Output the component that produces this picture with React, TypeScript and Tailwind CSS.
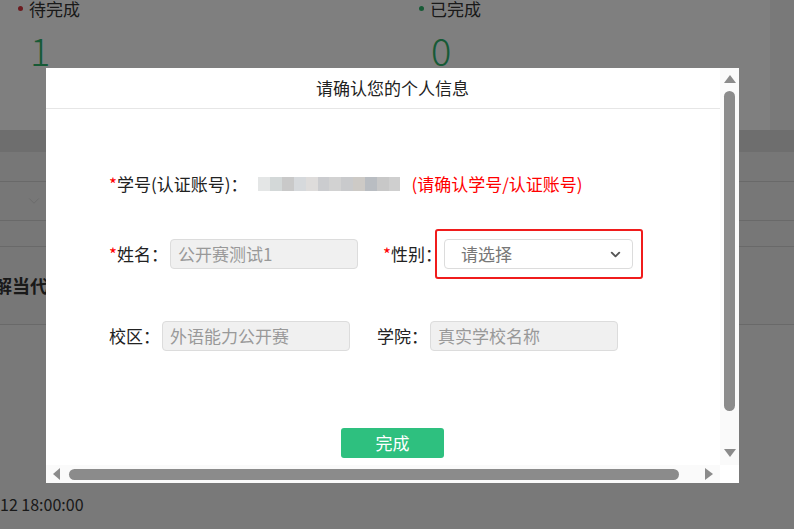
import { ChevronDown } from "lucide-react";

const font = { fontFamily: '"Noto Sans CJK SC", "Noto Sans", sans-serif' };

const mosaic = [
  "#e4e6e6",
  "#d3d8d8",
  "#c9c9c9",
  "#d6d9dc",
  "#dedcdb",
  "#cbcccf",
  "#d2d2d2",
  "#c9cacc",
  "#cdcac6",
  "#b9bdc2",
  "#c8c8c8",
  "#cfcfcf",
];

function Stat({ label, value, dot }: { label: string; value: string; dot: string }) {
  return (
    <div className="flex flex-col">
      <div className="flex items-center gap-[6px] -mt-[4px] text-[17px] text-[#333]">
        <span className={`h-[5px] w-[5px] rounded-full ${dot}`} />
        <span>{label}</span>
      </div>
      <div className="ml-[12px] mt-[6px] text-[38px] font-light leading-[44px] text-[#2fb56c]">
        {value}
      </div>
    </div>
  );
}

function Backdrop() {
  return (
    <div className="flex h-full w-full flex-col bg-[#f2f2f2]" style={font}>
      <div className="flex h-[130px] w-[770px] gap-[339px] bg-white pl-[18px]">
        <Stat label="待完成" value="1" dot="bg-[#d9363e]" />
        <Stat label="已完成" value="0" dot="bg-[#2fb56c]" />
      </div>
      <div className="h-[22px] bg-[#dcdcdc]" />
      <div className="flex flex-col bg-[#eeeeee]">
        <div className="h-[30px] border-b border-[#d2d2d2]" />
        <div className="flex h-[39px] items-center border-b border-[#d2d2d2] pl-[25px]">
          <ChevronDown size={18} strokeWidth={1.2} className="text-[#d6d6d6]" />
        </div>
        <div className="h-[26px] border-b border-[#d2d2d2]" />
        <div className="flex h-[78px] items-center overflow-hidden border-b border-[#d2d2d2]">
          <span className="-ml-[24px] shrink-0 whitespace-nowrap text-[18px] font-bold text-[#333]">
            理解当代
          </span>
        </div>
      </div>
      <div className="flex-1" />
      <div className="pb-[13px] text-[16px] text-[#333]">12 18:00:00</div>
    </div>
  );
}

function Field({ label, placeholder, required }: { label: string; placeholder: string; required?: boolean }) {
  return (
    <div className="flex items-center">
      <span className="whitespace-nowrap text-[17px] text-[#222]">
        {required && <span className="text-[#f00]">*</span>}
        {label}：
      </span>
      <div className="ml-[2px] flex h-[30px] w-[188px] items-center rounded-[4px] border border-[#dcdcdc] bg-[#f0f0f0] px-[7px] text-[17px] text-[#999]">
        {placeholder}
      </div>
    </div>
  );
}

function Dialog() {
  return (
    <div className="absolute left-[46px] top-[68px] flex h-[415px] w-[693px] flex-col bg-white" style={font}>
      <div className="flex h-[397px]">
        <div className="w-[674px] overflow-hidden">
          <div className="w-[693px]">
            <div className="w-[674px] border-b border-[#e6e6e6]">
              <div className="flex h-[40px] w-[693px] items-center justify-center text-[17px] text-[#222]">
                请确认您的个人信息
              </div>
            </div>
            <div className="flex flex-col pl-[63px] pt-[60px]">
              <div className="flex h-[30px] items-center text-[17px]">
                <span className="text-[#222]">
                  <span className="text-[#f00]">*</span>学号(认证账号)：
                </span>
                <div className="ml-[11px] flex h-[14px] w-[142px]">
                  {mosaic.map((c, i) => (
                    <span key={i} className="h-full flex-1" style={{ backgroundColor: c }} />
                  ))}
                </div>
                <span className="ml-[11px] text-[#f00]">(请确认学号/认证账号)</span>
              </div>
              <div className="mt-[30px] flex h-[50px] items-center">
                <Field label="姓名" placeholder="公开赛测试1" required />
                <span className="ml-[25px] whitespace-nowrap text-[17px] text-[#222]">
                  <span className="text-[#f00]">*</span>性别：
                </span>
                <div className="-ml-[7px] rounded-[3px] border-2 border-[#f01c1c] py-[8px] pl-[7px] pr-[8px]">
                  <div className="flex h-[30px] w-[189px] items-center justify-between rounded-[4px] border border-[#dcdcdc] bg-white pl-[16px] pr-[9px] text-[17px] text-[#777]">
                    <span>请选择</span>
                    <ChevronDown size={15} strokeWidth={3} className="text-[#555]" />
                  </div>
                </div>
              </div>
              <div className="mt-[42px] flex h-[30px] items-center gap-[27px]">
                <Field label="校区" placeholder="外语能力公开赛" />
                <Field label="学院" placeholder="真实学校名称" />
              </div>
            </div>
            <div className="mt-[77px] flex w-[693px] justify-center">
              <button className="h-[30px] w-[103px] rounded-[3px] bg-[#2ec07f] text-[17px] text-white">
                完成
              </button>
            </div>
          </div>
        </div>
        <div className="flex w-[19px] flex-col items-center bg-[#fafafa] pt-[7px]">
          <span className="h-0 w-0 border-x-[6px] border-b-[8px] border-x-transparent border-b-[#8b8b8b]" />
          <span className="mt-[8px] h-[320px] w-[11px] rounded-full bg-[#8b8b8b]" />
          <span className="mt-[38px] h-0 w-0 border-x-[6px] border-t-[8px] border-x-transparent border-t-[#8b8b8b]" />
        </div>
      </div>
      <div className="flex h-[18px]">
        <div className="flex w-[674px] items-center bg-[#fafafa] pl-[7px]">
          <span className="h-0 w-0 border-y-[6px] border-r-[7px] border-y-transparent border-r-[#8b8b8b]" />
          <span className="ml-[9px] h-[11px] w-[610px] rounded-full bg-[#8b8b8b]" />
          <span className="ml-[26px] h-0 w-0 border-y-[6px] border-l-[8px] border-y-transparent border-l-[#8b8b8b]" />
        </div>
        <div className="w-[19px] bg-white" />
      </div>
    </div>
  );
}

export default function App() {
  return (
    <div className="relative h-[529px] w-[794px] overflow-hidden">
      <Backdrop />
      <div className="absolute inset-0 bg-black/50" />
      <Dialog />
    </div>
  );
}
